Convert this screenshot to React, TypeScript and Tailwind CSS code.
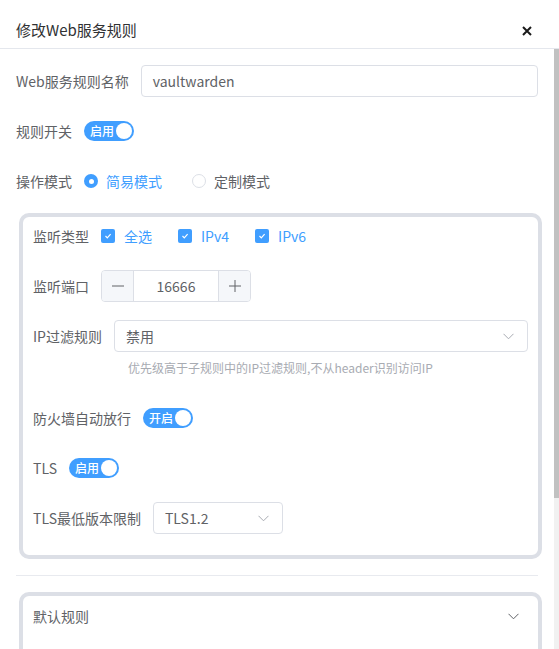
import { ReactNode } from "react";

function Label({ children }: { children: ReactNode }) {
  return <span className="pr-[12px] text-[14px] text-[#606266] whitespace-nowrap">{children}</span>;
}

function Switch({ text }: { text: string }) {
  return (
    <div className="flex h-[20px] w-[50px] items-center justify-between rounded-full bg-[#409eff] pl-[6px] pr-[2px]">
      <span className="text-[12px] font-medium leading-none text-white">{text}</span>
      <span className="h-[16px] w-[16px] rounded-full bg-white" />
    </div>
  );
}

function Check({ text }: { text: string }) {
  return (
    <div className="mr-[26px] flex items-center gap-[9px]">
      <span className="flex h-[14px] w-[14px] items-center justify-center rounded-[2px] bg-[#409eff]">
        <svg width="10" height="10" viewBox="0 0 10 10">
          <polyline points="2.5,5 4.3,6.8 7.6,3.2" fill="none" stroke="white" strokeWidth="1.2" />
        </svg>
      </span>
      <span className="text-[14px] text-[#409eff]">{text}</span>
    </div>
  );
}

function Chevron({ color = "#a8abb2" }: { color?: string }) {
  return (
    <svg width="11" height="7" viewBox="0 0 11 7">
      <polyline points="0.5,0.8 5.5,5.8 10.5,0.8" fill="none" stroke={color} strokeWidth="1" />
    </svg>
  );
}

function Select({ value, className }: { value: string; className: string }) {
  return (
    <div
      className={`flex h-[32px] items-center justify-between rounded-[4px] border border-[#dcdfe6] pl-[11px] pr-[13px] ${className}`}
    >
      <span className="text-[14px] text-[#606266]">{value}</span>
      <Chevron />
    </div>
  );
}

export default function App() {
  return (
    <div className="h-[649px] w-[559px] overflow-hidden bg-white font-['Noto_Sans_CJK_SC',sans-serif]">
      {/* Header */}
      <div className="flex h-[49px] items-center justify-between border-b border-[#e4e7ed] pl-[16px] pr-[25px] pt-[13px]">
        <span className="text-[15px] text-[#303133]">修改Web服务规则</span>
        <svg width="14" height="14" viewBox="0 0 14 14">
          <path d="M3 3L11 11M11 3L3 11" stroke="#1a1a1a" strokeWidth="2" />
        </svg>
      </div>

      <div className="flex h-[600px]">
        {/* Body */}
        <div className="flex-1 overflow-hidden px-[16px] pt-[16px]">
          <div className="mb-[18px] flex h-[32px] items-center">
            <Label>Web服务规则名称</Label>
            <div className="flex h-[32px] flex-1 items-center rounded-[4px] border border-[#dcdfe6] px-[11px] text-[14px] text-[#606266]">
              vaultwarden
            </div>
          </div>

          <div className="mb-[18px] flex h-[32px] items-center">
            <Label>规则开关</Label>
            <Switch text="启用" />
          </div>

          <div className="mb-[16px] flex h-[32px] items-center">
            <Label>操作模式</Label>
            <div className="mr-[30px] flex items-center gap-[8px]">
              <span className="flex h-[14px] w-[14px] items-center justify-center rounded-full bg-[#409eff]">
                <span className="h-[5px] w-[5px] rounded-full bg-white" />
              </span>
              <span className="text-[14px] text-[#409eff]">简易模式</span>
            </div>
            <div className="flex items-center gap-[8px]">
              <span className="h-[14px] w-[14px] rounded-full border border-[#dcdfe6] bg-white" />
              <span className="text-[14px] text-[#606266]">定制模式</span>
            </div>
          </div>

          {/* Listen card */}
          <div className="-mr-[4px] ml-[3px] rounded-[10px] border-[4px] border-[#dcdfe6] px-[10px] pt-[3px]">
            <div className="mb-[18px] flex h-[32px] items-center">
              <Label>监听类型</Label>
              <Check text="全选" />
              <Check text="IPv4" />
              <Check text="IPv6" />
            </div>

            <div className="mb-[18px] flex h-[32px] items-center">
              <Label>监听端口</Label>
              <div className="flex h-[32px] w-[150px] overflow-hidden rounded-[4px] border border-[#dcdfe6]">
                <div className="flex w-[32px] items-center justify-center border-r border-[#dcdfe6] bg-[#f5f7fa]">
                  <svg width="14" height="14" viewBox="0 0 14 14">
                    <path d="M1 7H13" stroke="#606266" strokeWidth="1" />
                  </svg>
                </div>
                <div className="flex flex-1 items-center justify-center text-[14px] text-[#606266]">16666</div>
                <div className="flex w-[32px] items-center justify-center border-l border-[#dcdfe6] bg-[#f5f7fa]">
                  <svg width="14" height="14" viewBox="0 0 14 14">
                    <path d="M1 7H13M7 1V13" stroke="#606266" strokeWidth="1" />
                  </svg>
                </div>
              </div>
            </div>

            <div className="mb-[26px]">
              <div className="flex h-[32px] items-center">
                <Label>IP过滤规则</Label>
                <Select value="禁用" className="flex-1" />
              </div>
              <div className="mt-[8px] pl-[95px] text-[12px] leading-[16px] text-[#a8abb2]">
                优先级高于子规则中的IP过滤规则,不从header识别访问IP
              </div>
            </div>

            <div className="mb-[18px] flex h-[32px] items-center">
              <Label>防火墙自动放行</Label>
              <Switch text="开启" />
            </div>

            <div className="mb-[18px] flex h-[32px] items-center">
              <Label>TLS</Label>
              <Switch text="启用" />
            </div>

            <div className="mb-[21px] flex h-[32px] items-center">
              <Label>TLS最低版本限制</Label>
              <Select value="TLS1.2" className="w-[130px]" />
            </div>
          </div>

          <div className="my-[16px] h-px bg-[#e8eaef]" />

          {/* Default rule card */}
          <div className="-mr-[4px] ml-[3px] h-[243px] rounded-[10px] border-[4px] border-[#dcdfe6]">
            <div className="flex h-[40px] items-center justify-between pl-[10px] pr-[19px]">
              <span className="text-[14px] text-[#606266]">默认规则</span>
              <Chevron color="#606266" />
            </div>
          </div>
        </div>

        {/* Scrollbar */}
        <div className="flex w-[5px] flex-col bg-[#f1f1f1]">
          <div className="h-[449px] bg-[#c1c1c1]" />
        </div>
      </div>
    </div>
  );
}
